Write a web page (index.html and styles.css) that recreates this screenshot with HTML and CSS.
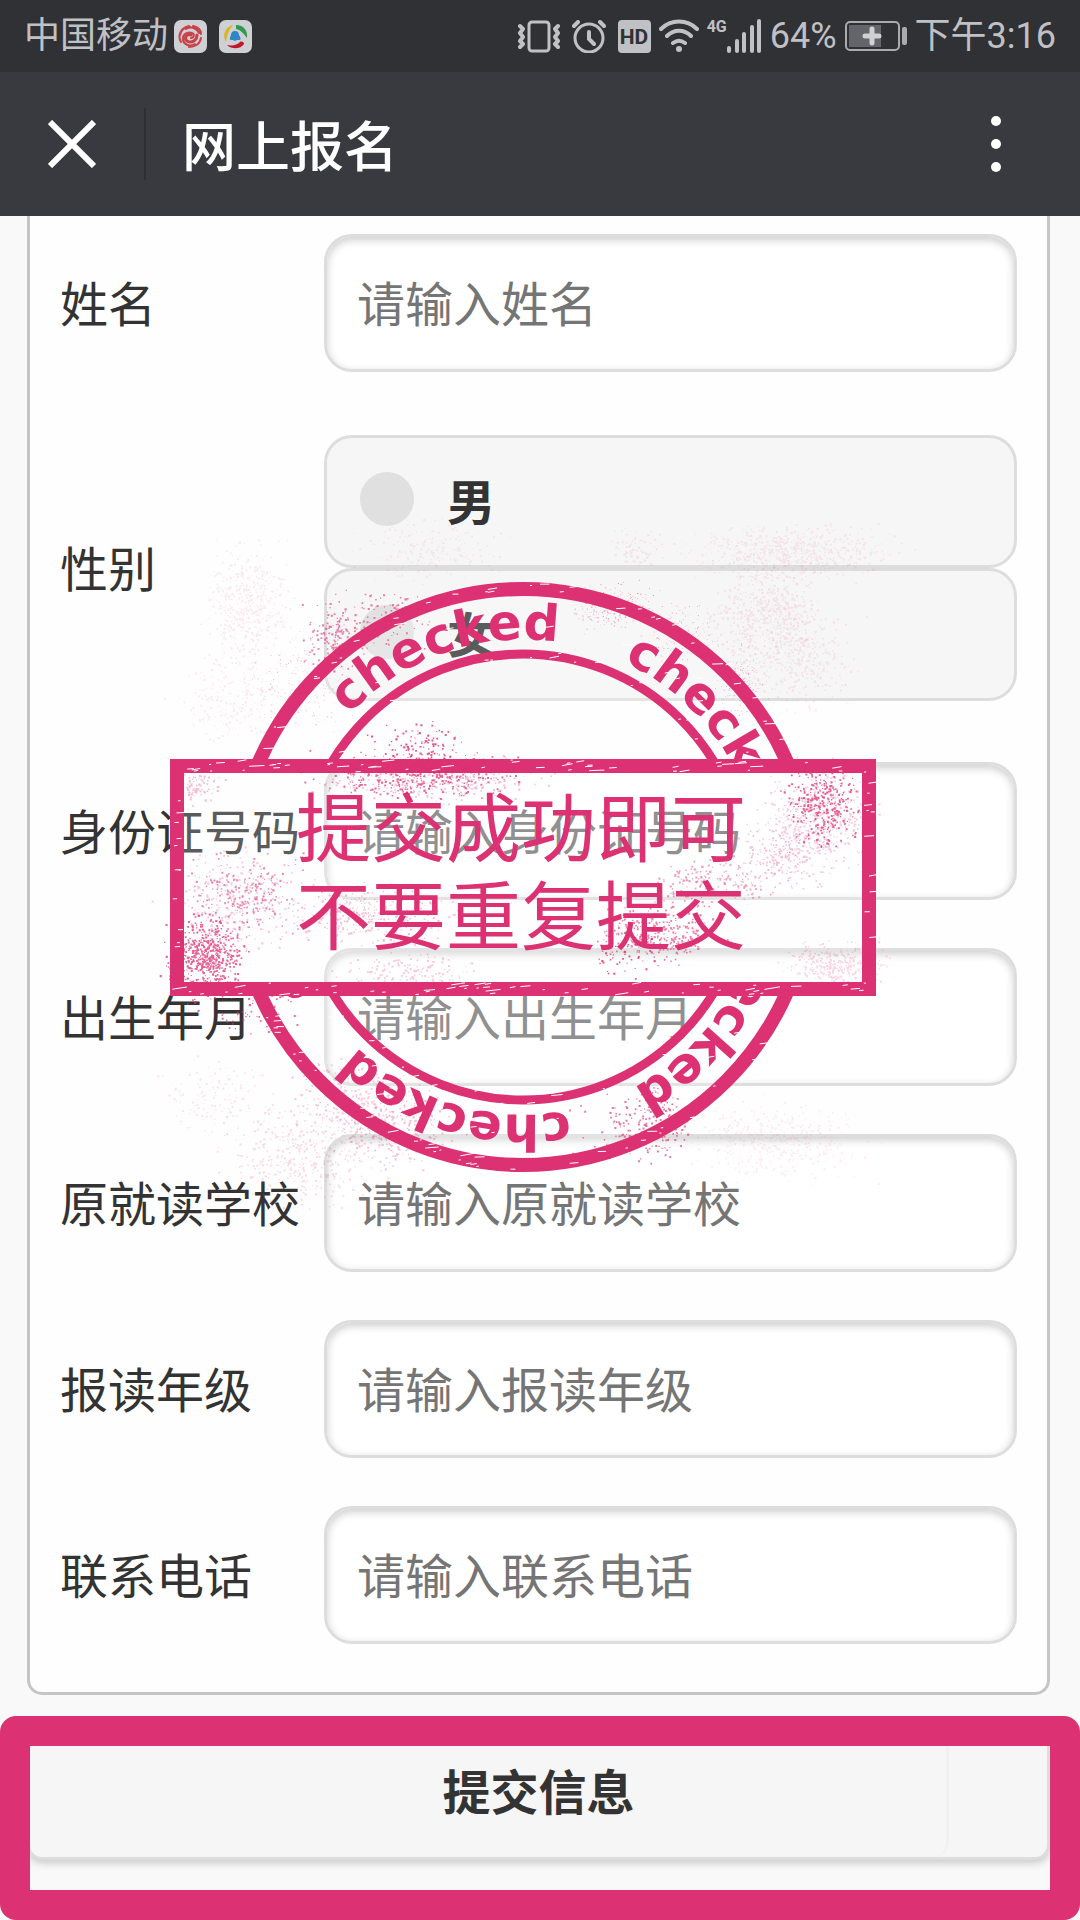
FILE: index.html
```html
<!DOCTYPE html>
<html lang="zh-CN">
<head>
    <meta charset="UTF-8">
    <meta name="viewport" content="width=device-width, initial-scale=1.0">
    <title>网上报名</title>
    <link rel="stylesheet" href="styles.css">
</head>
<body>
    <!-- Status bar -->
    <div class="status">
        <span class="status-text">中国移动</span>
        <div class="apps">
            <svg width="33" height="33" viewBox="0 0 33 33">
                <rect width="33" height="33" rx="7" fill="#cfd0d4"/>
                <g fill="none" stroke="#c94048" stroke-linecap="round">
                    <path stroke-width="3" d="M17 15c-5-2-7 4-4 6 5 3 10-1 10-6"/>
                    <path stroke-width="2" d="M17 18c3 0 4-4 1-5-5-2-10 2-9 7 1 5 7 7 12 4"/>
                    <path stroke-width="2" d="M7 22C3 15 7 8 15 6M12 9c5-3 11-1 13 4M27 18c-1 6-6 9-12 9M19 6c5 1 8 4 8 8M6 15c1-5 5-8 10-8"/>
                </g>
            </svg>
            <svg width="33" height="33" viewBox="0 0 33 33">
                <rect width="33" height="33" rx="7" fill="#cfd0d4"/>
                <path d="M14 5C6 7 3 15 7 22c1-6 2-11 7-17z" fill="#d9b51c"/>
                <path d="M17 5c8 0 12 6 11 13-3-4-6-8-11-9z" fill="#2f9a4b"/>
                <path d="M8 25c6 1 10 0 13-3 2-1 4 0 4 2-3 5-12 6-17 1z" fill="#c0182c"/>
                <path d="M16 11c3 0 4 2 4 4 2 3 2 5 0 5h-2l-2 1-2-1h-2c-2 0-1-3 0-5 0-2 1-4 4-4z" fill="#2f86c4"/>
            </svg>
        </div>
        <div class="indicators">
            <div class="modes">
                <svg width="42" height="33" viewBox="0 0 42 33" fill="none" stroke="#c0c1c5" stroke-width="3" stroke-linecap="round" stroke-linejoin="round">
                    <rect x="11" y="2" width="20" height="29" rx="3"/>
                    <path stroke-width="4" d="M2 6l3 3-3 4 3 4-3 4 3 3-3 3M40 6l-3 3 3 4-3 4 3 4-3 3 3 3"/>
                </svg>
                <svg width="34" height="33" viewBox="0 0 34 33" fill="none" stroke="#c0c1c5" stroke-width="3" stroke-linecap="round">
                    <circle cx="17" cy="18" r="14"/>
                    <path stroke-width="4" d="M17 12v7l5 5M2 6l4-4M32 6l-4-4"/>
                </svg>
                <svg width="33" height="33" viewBox="0 0 33 33">
                    <rect width="33" height="33" rx="4" fill="#c0c1c5"/>
                    <text x="16" y="24" text-anchor="middle" class="hd">HD</text>
                </svg>
            </div>
            <svg width="40" height="34" viewBox="0 0 40 34" fill="none" stroke="#c0c1c5" stroke-width="4" stroke-linecap="round">
                <path d="M2 10c10-10 26-10 36 0M8 17c7-7 17-7 24 0M14 24c4-3 8-3 12 0"/>
                <circle cx="20" cy="30" r="3" fill="#c0c1c5" stroke="none"/>
            </svg>
            <div class="signal">
                <span class="net">4G</span>
                <svg width="35" height="34" viewBox="0 0 35 34" stroke="#c0c1c5" stroke-width="4" stroke-linecap="round">
                    <path d="M2 29v3M10 22v10M17 15v17M25 8v24M32 2v30"/>
                </svg>
            </div>
            <span class="status-text">64%</span>
            <svg width="62" height="30" viewBox="0 0 62 30">
                <rect x="1" y="1" width="53" height="28" rx="4" fill="none" stroke="#aaabaf" stroke-width="2"/>
                <rect x="4" y="4" width="32" height="22" fill="#64656a"/>
                <path d="M27 8v14M20 15h14" stroke="#d0d1d4" stroke-width="5" stroke-linecap="round"/>
                <rect x="57" y="6" width="5" height="18" rx="2" fill="#aaabaf"/>
            </svg>
            <span class="status-text">下午3:16</span>
        </div>
    </div>

    <!-- Title bar -->
    <header class="navbar">
        <button type="button" class="icon-btn close" aria-label="关闭">
            <svg width="48" height="48" viewBox="0 0 48 48" stroke="#fff" stroke-width="6">
                <path d="M2 2l44 44M46 2L2 46"/>
            </svg>
        </button>
        <h1>网上报名</h1>
        <button type="button" class="icon-btn" aria-label="更多">
            <svg width="12" height="58" viewBox="0 0 12 58" fill="#fff">
                <circle cx="6" cy="6" r="5"/><circle cx="6" cy="29" r="5"/><circle cx="6" cy="52" r="5"/>
            </svg>
        </button>
    </header>

    <main>
        <form id="signup">
            <div class="card">
                <div class="row">
                    <label class="label" for="name">姓名</label>
                    <input type="text" id="name" name="name" placeholder="请输入姓名">
                </div>
                <div class="row row-radio" role="radiogroup" aria-labelledby="sexLabel">
                    <span class="label" id="sexLabel">性别</span>
                    <div class="radios">
                        <label class="radio"><input type="radio" name="sex" value="1">男</label>
                        <label class="radio"><input type="radio" name="sex" value="2">女</label>
                    </div>
                </div>
                <div class="row">
                    <label class="label" for="idcard">身份证号码</label>
                    <input type="text" id="idcard" name="idcard" placeholder="请输入身份证号码">
                </div>
                <div class="row">
                    <label class="label" for="birth">出生年月</label>
                    <input type="text" id="birth" name="birth" placeholder="请输入出生年月">
                </div>
                <div class="row">
                    <label class="label" for="school">原就读学校</label>
                    <input type="text" id="school" name="school" placeholder="请输入原就读学校">
                </div>
                <div class="row">
                    <label class="label" for="grade">报读年级</label>
                    <input type="text" id="grade" name="grade" placeholder="请输入报读年级">
                </div>
                <div class="row">
                    <label class="label" for="tel">联系电话</label>
                    <input type="tel" id="tel" name="tel" placeholder="请输入联系电话">
                </div>
            </div>

            <div class="submit">
                <button type="submit">提交信息</button>
            </div>
        </form>

        <!-- Stamp -->
        <svg class="stamp" width="800" height="700" viewBox="130 510 800 700">
            <defs>
                <clipPath id="outside">
                    <path d="M130 510h800v249H130zM130 996h800v214H130z"/>
                </clipPath>
                <path id="arc" d="M349 715A237 237 0 0 1 697 1039A237 237 0 0 1 349 715"/>
            </defs>
            <g clip-path="url(#outside)">
                <circle cx="523" cy="877" r="288" class="fade"/>
                <circle cx="523" cy="877" r="288" class="ring" stroke-width="14"/>
                <circle cx="523" cy="877" r="223" class="ring" stroke-width="9"/>
                <g class="ring-text">
                    <text><textPath href="#arc" startOffset="0">checked</textPath></text>
                    <text><textPath href="#arc" startOffset="20%">checked</textPath></text>
                    <text><textPath href="#arc" startOffset="40%">checked</textPath></text>
                    <text><textPath href="#arc" startOffset="60%">checked</textPath></text>
                    <text><textPath href="#arc" startOffset="80%">checked</textPath></text>
                </g>
            </g>
            <rect x="177" y="766" width="692" height="223" class="fade"/>
            <rect x="177" y="766" width="692" height="223" class="ring" stroke-width="14"/>
            <g id="ink"></g>
            <g id="scratches"></g>
            <g class="stamp-text">
                <text x="521" y="856">提交成功即可</text>
                <text x="521" y="944">不要重复提交</text>
            </g>
        </svg>
    </main>

    <script src="stamp.js"></script>
</body>
</html>
```
FILE: styles.css
```css
* {
    box-sizing: border-box;
}
body {
    margin: 0;
    background: #f9f9f9;
    color: #333;
    font-family: "Noto Sans CJK SC", sans-serif;
    font-size: 48px;
    line-height: 1;
}
svg {
    display: block;
    flex: none;
}
.status {
    display: flex;
    align-items: center;
    height: 72px;
    padding: 0 24px;
    background: #303135;
    color: #c0c1c5;
    font-family: Roboto, "Noto Sans CJK SC", sans-serif;
}
.status-text {
    font-size: 36px;
    line-height: 76px;
    white-space: nowrap;
}
.apps {
    display: flex;
    gap: 12px;
    margin-left: 6px;
}
.indicators {
    display: flex;
    align-items: center;
    gap: 8px;
    margin-left: auto;
}
.modes {
    display: flex;
    gap: 12px;
}
.signal {
    display: flex;
    align-items: flex-start;
}
.net {
    font-size: 16px;
    line-height: 16px;
    font-weight: bold;
}
.hd {
    font-size: 21px;
    font-weight: bold;
    fill: #303135;
}
.navbar {
    display: flex;
    align-items: center;
    height: 144px;
    padding: 0 72px 0 0;
    background: #393a3f;
    color: #fff;
}
.navbar h1 {
    flex: 1;
    margin: 0;
    padding-left: 36px;
    font-size: 54px;
    font-weight: 500;
}
.icon-btn {
    display: flex;
    align-items: center;
    height: 72px;
    padding: 0 6px;
    border: none;
    background: none;
}
.close {
    padding: 0 48px;
    border-right: 2px solid #2e2f33;
}
main {
    position: relative;
}
.card {
    display: flex;
    flex-direction: column;
    gap: 48px;
    margin: 0 30px 21px 27px;
    padding: 18px 30px 48px;
    border: 3px solid #c5c5c5;
    border-top: none;
    border-radius: 0 0 15px 15px;
    background: #fefefe;
}
.row {
    display: grid;
    grid-template-columns: 264px 1fr;
    align-items: center;
}
.row-radio {
    margin: 15px 0 13px;
}
.label {
    padding-bottom: 5px;
}
input[type="text"],
input[type="tel"] {
    width: 100%;
    height: 138px;
    padding: 0 30px 5px;
    border: 3px solid #ddd;
    border-radius: 28px;
    background: #fff;
    box-shadow: inset 0 3px 9px rgba(0, 0, 0, 0.2);
    color: #333;
    font: inherit;
}
input::placeholder {
    color: #757575;
}
.radio {
    display: flex;
    align-items: center;
    gap: 33px;
    height: 133px;
    padding: 0 33px 5px;
    border: 3px solid #ddd;
    border-radius: 28px;
    background: #f6f6f6;
    font-weight: bold;
}
.radio input {
    appearance: none;
    width: 54px;
    height: 54px;
    margin: 0;
    border-radius: 50%;
    background: #e0e0e0;
}
.radio input:checked {
    border: 18px solid #38c;
    background: #fff;
}

/* submit button with the marker frame drawn over it */
.submit {
    position: relative;
    padding: 6px 30px 60px 27px;
}
.submit::after {
    content: "";
    position: absolute;
    inset: 0;
    border: 30px solid #dc3172;
    border-radius: 16px;
    pointer-events: none;
}
.submit button {
    position: relative;
    display: block;
    width: 100%;
    height: 138px;
    padding: 0 0 5px;
    border: 3px solid #ddd;
    border-radius: 15px;
    background: #f6f6f6;
    box-shadow: 0 3px 9px rgba(0, 0, 0, 0.2);
    color: #333;
    font: inherit;
    font-weight: bold;
}
.submit button::after {
    content: "";
    position: absolute;
    inset: 0 98px 0 0;
    border-right: 3px solid #f1f1f1;
    border-radius: 0 0 15px 0;
}

.stamp {
    position: absolute;
    top: 294px;
    left: 130px;
    pointer-events: none;
}
.ring {
    fill: none;
    stroke: #dc3172;
}
.fade {
    fill: #fff;
    fill-opacity: 0.2;
}
.ring-text {
    fill: #dc3172;
    font-family: "DejaVu Sans", sans-serif;
    font-size: 50px;
    font-weight: bold;
}
.stamp-text {
    fill: #dc3172;
    font-size: 75px;
    text-anchor: middle;
}
```
FILE: stamp.js
```javascript
const NS = 'http://www.w3.org/2000/svg';
let seed = 7;

function rand() {
    seed = (seed * 16807) % 2147483647;
    return seed / 2147483647;
}

function spread() {
    return (rand() + rand() + rand() - 1.5) / 1.3;
}

function addPath(parent, d, attrs) {
    const path = document.createElementNS(NS, 'path');
    path.setAttribute('d', d);
    for (const key in attrs) path.setAttribute(key, attrs[key]);
    document.getElementById(parent).appendChild(path);
}

// Ink spatter: x, y, rx, ry, dots, dot size, opacity
const spatter = [
    [415, 774, 110, 24, 380, 2, 0.7],
    [418, 748, 60, 30, 130, 2, 0.8],
    [430, 780, 130, 26, 300, 2, 0.3],
    [206, 956, 44, 46, 600, 2, 0.75],
    [245, 895, 60, 50, 240, 2, 0.55],
    [235, 900, 80, 60, 260, 2, 0.25],
    [200, 785, 28, 22, 80, 2, 0.3],
    [822, 802, 40, 46, 340, 2, 0.75],
    [815, 820, 65, 66, 480, 2, 0.25],
    [782, 856, 45, 36, 170, 2, 0.3],
    [735, 880, 50, 26, 90, 2, 0.4],
    [690, 885, 40, 30, 100, 2, 0.5],
    [660, 932, 66, 32, 280, 2, 0.6],
    [625, 955, 45, 26, 50, 2, 0.8],
    [365, 915, 100, 34, 320, 2, 0.3],
    [410, 970, 80, 24, 160, 2, 0.25],
    [835, 965, 55, 26, 300, 2, 0.2],
    [335, 635, 38, 42, 150, 2, 0.6],
    [392, 618, 42, 34, 90, 2, 0.6],
    [300, 685, 60, 60, 260, 1, 0.35],
    [248, 605, 50, 75, 500, 2, 0.1],
    [230, 700, 60, 50, 180, 2, 0.1],
    [430, 550, 80, 35, 180, 2, 0.08],
    [790, 552, 120, 30, 600, 2, 0.09],
    [635, 548, 30, 22, 80, 2, 0.1],
    [765, 615, 60, 60, 550, 2, 0.11],
    [805, 660, 55, 55, 300, 2, 0.1],
    [615, 607, 45, 26, 260, 1, 0.5],
    [680, 635, 45, 36, 180, 1, 0.4],
    [740, 680, 30, 45, 240, 1, 0.4],
    [255, 1012, 65, 28, 60, 2, 0.7],
    [355, 1100, 70, 50, 260, 2, 0.25],
    [400, 1130, 70, 45, 260, 2, 0.3],
    [300, 1155, 90, 60, 420, 2, 0.18],
    [215, 1095, 60, 45, 130, 2, 0.12],
    [655, 1120, 45, 45, 130, 2, 0.65],
    [630, 1130, 65, 40, 80, 2, 0.65],
    [775, 1140, 110, 45, 450, 2, 0.09],
];

spatter.forEach(([x, y, rx, ry, dots, size, opacity]) => {
    let d = '';
    for (let i = 0; i < dots; i++) {
        const px = (x + spread() * rx).toFixed(1);
        const py = (y + spread() * ry).toFixed(1);
        const s = (size * (0.5 + rand() * 0.6)).toFixed(1);
        d += `M${px} ${py}h${s}v${s}h-${s}z`;
    }
    addPath('ink', d, { fill: '#dc3172', opacity });
});

// Worn scratches across the rings, the lettering and the box border
let scratches = '';

function scratch(x, y) {
    const len = 2 + rand() * rand() * 16;
    scratches += `M${x.toFixed(1)} ${y.toFixed(1)}l${len.toFixed(1)} ${(-rand() * len / 5).toFixed(1)}`;
}

for (let i = 0; i < 200; i++) {
    const a = rand() * Math.PI * 2;
    const r = [288, 288, 223, 250][i % 4] + (rand() - 0.5) * (i % 4 === 3 ? 30 : 12);
    const y = 877 + Math.sin(a) * r;
    if (y < 757 || y > 998) scratch(523 + Math.cos(a) * r, y);
}
for (let i = 0; i < 100; i++) {
    scratch(175 + rand() * 685, (i % 2 ? 760 : 983) + rand() * 12);
}
for (let i = 0; i < 24; i++) {
    scratch((i % 2 ? 171 : 863) + rand() * 8, 765 + rand() * 225);
}
addPath('scratches', scratches, { stroke: '#fff', 'stroke-width': 1, fill: 'none' });
```
